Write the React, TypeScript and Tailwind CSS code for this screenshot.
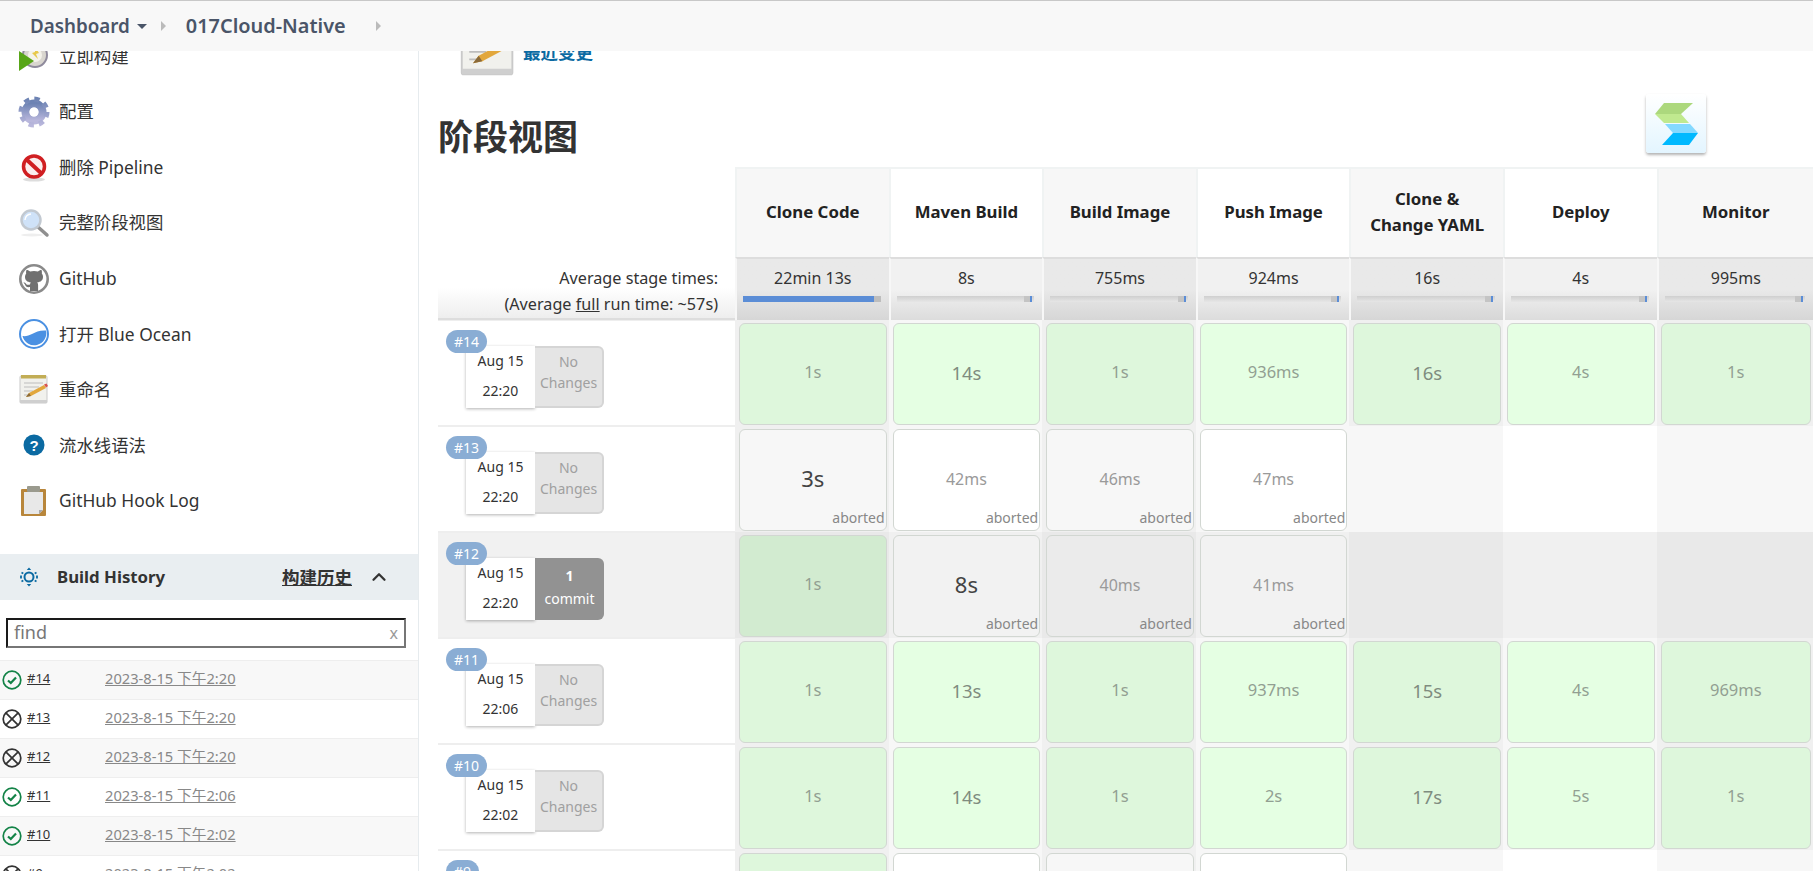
import { ChevronUp } from "lucide-react";

const font = "font-['Noto_Sans','Noto_Sans_CJK_SC',sans-serif]";

function RunIcon() {
  return (
    <svg width="32" height="32" viewBox="0 0 32 32">
      <circle cx="17" cy="15" r="12" fill="#d9d6cf" stroke="#8f8a9c" strokeWidth="2" />
      <circle cx="17" cy="15" r="7" fill="#f4f2ea" />
      <path d="M17 7l4 6-3 1 2 5-6-6 3-1z" fill="#e8c84a" />
      <path d="M1 11l15 10L1 31z" fill="#58a618" />
    </svg>
  );
}

function GearIcon() {
  return (
    <svg width="32" height="32" viewBox="0 0 32 32" fill="none">
      <defs>
        <linearGradient id="gearFill" x1="0" y1="0" x2="0" y2="1">
          <stop offset="0" stopColor="#6d83b3" />
          <stop offset="1" stopColor="#b9b7dc" />
        </linearGradient>
      </defs>
      <circle cx="16" cy="16" r="8.500" stroke="url(#gearFill)" strokeWidth="8" />
      <circle cx="16" cy="16" r="13" stroke="url(#gearFill)" strokeWidth="5" strokeDasharray="5.200 5" />
      <circle cx="16" cy="16" r="4.500" fill="#fff" />
    </svg>
  );
}

function NoIcon() {
  return (
    <svg width="32" height="32" viewBox="0 0 32 32">
      <ellipse cx="16" cy="28.500" rx="11" ry="2" fill="#ddd" />
      <circle cx="16" cy="15.500" r="10.500" fill="#fbeeee" stroke="#d01f22" strokeWidth="3.500" />
      <path d="M8.500 8.500l15 14" stroke="#d01f22" strokeWidth="4" />
    </svg>
  );
}

function SearchIcon() {
  return (
    <svg width="32" height="32" viewBox="0 0 32 32">
      <ellipse cx="14" cy="28" rx="11" ry="1.500" fill="#eeeeee" />
      <path d="M20 20l9 8" stroke="#8f8f8f" strokeWidth="3.500" strokeLinecap="round" />
      <circle cx="13" cy="13" r="9.500" fill="#cfe2f8" stroke="#c2c9d1" strokeWidth="2.500" />
      <path d="M7 13a6 6 0 0 1 6-6" stroke="#fff" strokeWidth="1.500" fill="none" />
    </svg>
  );
}

function GithubIcon() {
  return (
    <svg width="32" height="32" viewBox="0 0 32 32">
      <circle cx="16" cy="16" r="13.700" fill="#fff" stroke="#8a8a8a" strokeWidth="2.600" />
      <path
        d="M12 28v-4c-3 .6-4.400-.6-5-2.500-.4-1-1-1.400-1.600-1.800.7-.5 1.800-.2 2.600 1 .8 1.300 2.200 1.400 4 .8.100-.9.400-1.500.9-2-3.600-.5-5.900-2-5.900-5.700 0-1.300.5-2.400 1.200-3.300-.2-.9-.2-2.200.3-3.400 1.400 0 2.700.7 3.600 1.400 1.200-.3 2.500-.5 3.900-.5s2.700.2 3.900.5c.9-.7 2.200-1.400 3.600-1.400.5 1.200.5 2.500.3 3.400.7.900 1.200 2 1.200 3.300 0 3.700-2.300 5.200-5.900 5.700.7.600 1 1.500 1 2.600V28z"
        fill="#707070"
      />
    </svg>
  );
}

function OceanIcon() {
  return (
    <svg width="32" height="32" viewBox="0 0 32 32">
      <circle cx="16" cy="16" r="14" fill="#fff" stroke="#4a90e2" strokeWidth="2" />
      <path d="M4.500 18C8 18.500 11 17.500 14 16c4-2 8-4 14-3.500A12 12 0 0 1 4.500 18z" fill="#4a90e2" />
    </svg>
  );
}

function NotepadIcon({ size = 32 }: { size?: number }) {
  return (
    <svg width={size} height={size} viewBox="0 0 32 32">
      <rect x="2" y="2" width="27" height="27" rx="1" fill="#f1f1ed" stroke="#c9c9c9" />
      <rect x="3" y="1" width="25" height="3.500" fill="#c2ad55" />
      <path d="M6 9h19M6 13h15M6 17h9M6 21h6" stroke="#bdbdbd" strokeWidth="1" />
      <path d="M8 23l3-4 15-8 2 3-15 8z" fill="#e2a73c" />
      <path d="M8 23l3-4 2 3z" fill="#8a6a3a" />
      <path d="M26 10.500l2 3 2-1.500-1.500-2.500z" fill="#d9534f" />
      <rect x="2" y="26" width="27" height="3" fill="#cfcfcf" />
    </svg>
  );
}

function HelpIcon() {
  return (
    <svg width="32" height="32" viewBox="0 0 32 32">
      <circle cx="16" cy="16" r="10.500" fill="#0b6aa2" />
      <text x="16" y="21.500" textAnchor="middle" fontSize="15" fontWeight="700" fill="#fff" fontFamily="Liberation Sans">
        ?
      </text>
    </svg>
  );
}

function ClipboardIcon() {
  return (
    <svg width="32" height="32" viewBox="0 0 32 32">
      <rect x="3" y="4" width="25" height="27" rx="1" fill="#b8863b" />
      <path d="M6 7h19v18l-4 4H6z" fill="#e8e8e8" />
      <path d="M25 25l-4 4v-4z" fill="#a8a8a8" />
      <rect x="9" y="1" width="13" height="6" rx="1" fill="#9a9a8e" />
    </svg>
  );
}

function SunIcon() {
  return (
    <svg width="20" height="20" viewBox="0 0 20 20" fill="none" stroke="#0b6aa2">
      <circle cx="10" cy="10" r="4.500" strokeWidth="2" />
      <path d="M10 .5L7.800 3h4.400zM10 19.500L7.800 17h4.400z" fill="#0b6aa2" stroke="none" />
      <path d="M2.500 5.500l1.800 1M17.500 5.500l-1.800 1M2.500 14.500l1.800-1M17.500 14.500l-1.800-1M2 8.500v3M18 8.500v3" strokeWidth="1.800" />
    </svg>
  );
}

function SuccessIcon() {
  return (
    <svg width="20" height="20" viewBox="0 0 20 20" fill="none" stroke="#138347">
      <circle cx="10" cy="10" r="8.800" strokeWidth="1.700" />
      <path d="M6 10.500l2.800 2.500L14 7.500" strokeWidth="2.200" />
    </svg>
  );
}

function AbortedIcon() {
  return (
    <svg width="20" height="20" viewBox="0 0 20 20" fill="none" stroke="#333">
      <circle cx="10" cy="10" r="8.800" strokeWidth="1.700" />
      <path d="M4.100 4.100l11.800 11.800M15.900 4.100L4.100 15.900" strokeWidth="1.700" />
    </svg>
  );
}

function StageLogo() {
  return (
    <div className="w-[60px] h-[59px] rounded-[3px] bg-gradient-to-b from-white to-[#e3f5ff] shadow-[0_2px_3px_rgba(0,0,0,0.3)]">
      <svg width="60" height="59" viewBox="0 0 60 59">
        <path d="M18 9h29L35 20H9z" fill="#acd87d" />
        <path d="M9 20h26l8 9H18z" fill="#c0e98f" />
        <path d="M19 30h25l8 9H27z" fill="#84d9ff" />
        <path d="M27 39h25l-9 12H16z" fill="#00b9ff" />
      </svg>
    </div>
  );
}

const tasks = [
  { icon: <GearIcon />, label: "配置" },
  { icon: <NoIcon />, label: "删除 Pipeline" },
  { icon: <SearchIcon />, label: "完整阶段视图" },
  { icon: <GithubIcon />, label: "GitHub" },
  { icon: <OceanIcon />, label: "打开 Blue Ocean" },
  { icon: <NotepadIcon />, label: "重命名" },
  { icon: <HelpIcon />, label: "流水线语法" },
  { icon: <ClipboardIcon />, label: "GitHub Hook Log" },
];

const history = [
  { id: "#14", ok: true, date: "2023-8-15 下午2:20" },
  { id: "#13", ok: false, date: "2023-8-15 下午2:20" },
  { id: "#12", ok: false, date: "2023-8-15 下午2:20" },
  { id: "#11", ok: true, date: "2023-8-15 下午2:06" },
  { id: "#10", ok: true, date: "2023-8-15 下午2:02" },
  { id: "#9", ok: false, date: "2023-8-15 下午2:02" },
];

const stages = [
  { name: "Clone Code", avg: "22min 13s" },
  { name: "Maven Build", avg: "8s" },
  { name: "Build Image", avg: "755ms" },
  { name: "Push Image", avg: "924ms" },
  { name: "Clone &\nChange YAML", avg: "16s" },
  { name: "Deploy", avg: "4s" },
  { name: "Monitor", avg: "995ms" },
];

type Cell = { t: string; s: "ok" | "ab"; c: string };

const sm = "text-[16.5px] text-[#929f92]";
const md = "text-[18.5px] text-[#7f8c7f]";
const lg = "text-[22px] text-[#444]";
const ab = "text-[16px] text-[#9a9a9a]";

const rows: {
  id: string;
  date: string;
  time: string;
  commit?: boolean;
  hover?: boolean;
  cells: (Cell | null)[];
}[] = [
  {
    id: "#14",
    date: "Aug 15",
    time: "22:20",
    cells: [
      { t: "1s", s: "ok", c: sm },
      { t: "14s", s: "ok", c: md },
      { t: "1s", s: "ok", c: sm },
      { t: "936ms", s: "ok", c: sm },
      { t: "16s", s: "ok", c: md },
      { t: "4s", s: "ok", c: sm },
      { t: "1s", s: "ok", c: sm },
    ],
  },
  {
    id: "#13",
    date: "Aug 15",
    time: "22:20",
    cells: [
      { t: "3s", s: "ab", c: lg },
      { t: "42ms", s: "ab", c: ab },
      { t: "46ms", s: "ab", c: ab },
      { t: "47ms", s: "ab", c: ab },
      null,
      null,
      null,
    ],
  },
  {
    id: "#12",
    date: "Aug 15",
    time: "22:20",
    commit: true,
    hover: true,
    cells: [
      { t: "1s", s: "ok", c: sm },
      { t: "8s", s: "ab", c: lg },
      { t: "40ms", s: "ab", c: ab },
      { t: "41ms", s: "ab", c: ab },
      null,
      null,
      null,
    ],
  },
  {
    id: "#11",
    date: "Aug 15",
    time: "22:06",
    cells: [
      { t: "1s", s: "ok", c: sm },
      { t: "13s", s: "ok", c: md },
      { t: "1s", s: "ok", c: sm },
      { t: "937ms", s: "ok", c: sm },
      { t: "15s", s: "ok", c: md },
      { t: "4s", s: "ok", c: sm },
      { t: "969ms", s: "ok", c: sm },
    ],
  },
  {
    id: "#10",
    date: "Aug 15",
    time: "22:02",
    cells: [
      { t: "1s", s: "ok", c: sm },
      { t: "14s", s: "ok", c: md },
      { t: "1s", s: "ok", c: sm },
      { t: "2s", s: "ok", c: sm },
      { t: "17s", s: "ok", c: md },
      { t: "5s", s: "ok", c: sm },
      { t: "1s", s: "ok", c: sm },
    ],
  },
  {
    id: "#9",
    date: "Aug 15",
    time: "22:02",
    cells: [
      { t: "1s", s: "ok", c: sm },
      { t: "", s: "ab", c: ab },
      { t: "", s: "ab", c: ab },
      { t: "", s: "ab", c: ab },
      null,
      null,
      null,
    ],
  },
];

function cellBg(cell: Cell | null, odd: boolean, hover?: boolean) {
  if (!cell) {
    if (hover) return odd ? "bg-[#e9e9e9]" : "bg-[#f0f0f0]";
    return odd ? "bg-[#f7f7f7]" : "bg-white";
  }
  if (cell.s === "ok") {
    if (hover) return odd ? "bg-[#d2ebd0]" : "bg-[#d9f2d7]";
    return odd ? "bg-[#def7dc]" : "bg-[#e5ffe3]";
  }
  if (hover) return odd ? "bg-[#ebebeb]" : "bg-[#f2f2f2]";
  return odd ? "bg-[#f7f7f7]" : "bg-white";
}

function StageCell({ cell, odd, hover }: { cell: Cell | null; odd: boolean; hover?: boolean }) {
  const wrap = hover
    ? odd
      ? "bg-[#e9e9e9]"
      : "bg-[#f0f0f0]"
    : odd
      ? "bg-[#f0f0f0]"
      : "bg-[#f7f7f7]";
  if (!cell) {
    return <div className={`h-[106px] ${cellBg(null, odd, hover)}`} />;
  }
  return (
    <div className={`h-[106px] p-[3px_2px_1px_4px] ${wrap}`}>
      <div
        className={`relative h-full rounded-[6px] border-[1.5px] border-[#d2d7d2] flex items-center justify-center ${cellBg(cell, odd, hover)}`}
      >
        <span className={`-mt-[3px] ${cell.c}`}>{cell.t}</span>
        {cell.s === "ab" && (
          <span className="absolute right-[1px] bottom-[2px] text-[14px] leading-[20px] text-[#888]">aborted</span>
        )}
      </div>
    </div>
  );
}

function AvgBar({ first }: { first: boolean }) {
  return (
    <div className="ml-[6px] mr-[8px] mt-[8px] h-[6px] flex bg-gradient-to-b from-[#cfcfcf] to-[#e6e6e6]">
      {first ? (
        <>
          <div className="flex-1 bg-[#5b8dd6]" />
          <div className="w-[7px] bg-[#bdbdbd]" />
        </>
      ) : (
        <>
          <div className="flex-1" />
          <div className="w-[6px] bg-[#c4c4c4]" />
          <div className="w-[2px] bg-[#5b8dd6]" />
          <div className="w-[2px]" />
        </>
      )}
    </div>
  );
}

export default function App() {
  return (
    <div className={`relative h-[871px] w-[1813px] overflow-hidden bg-white text-[#333] ${font}`}>
      <div className="absolute top-0 left-0 right-0 z-10 h-[51px] bg-[#f8f8f8] border-t border-[#c8c8c8] flex items-center pl-[30px] font-semibold text-[#4a5568]">
        <span className="text-[18.800px]">Dashboard</span>
        <span className="ml-[7px] mt-[1px] w-0 h-0 border-x-[5px] border-x-transparent border-t-[5px] border-t-[#4a5568]" />
        <span className="ml-[14px] w-0 h-0 border-y-[5px] border-y-transparent border-l-[5px] border-l-[#bbb]" />
        <span className="ml-[20px] text-[19.900px]">017Cloud-Native</span>
        <span className="ml-[30px] w-0 h-0 border-y-[5px] border-y-transparent border-l-[5px] border-l-[#bbb]" />
      </div>

      <div className="flex h-full">
        <aside className="w-[419px] shrink-0 border-r border-[#e6ebee] flex flex-col">
          <div className="h-[84px] shrink-0 pt-[28.400px] pl-[18px] flex items-center">
            <RunIcon />
            <span className="ml-[9px] -mt-[1px] text-[17.400px]">立即构建</span>
          </div>
          {tasks.map((t) => (
            <div key={t.label} className="h-[55.6px] shrink-0 flex items-center pl-[18px]">
              {t.icon}
              <span className="ml-[9px] -mt-[1px] text-[17.400px]">{t.label}</span>
            </div>
          ))}
          <div className="mt-[25px] h-[46px] shrink-0 bg-[#e9eef1] flex items-center pl-[19px] pr-[28px]">
            <SunIcon />
            <span className="ml-[18px] font-bold text-[16.800px] flex-1">Build History</span>
            <span className="font-bold text-[17.500px] underline">构建历史</span>
            <ChevronUp className="ml-[16px] w-[22px] h-[22px]" strokeWidth={2.500} />
          </div>
          <div className="h-[60px] shrink-0 pt-[18px] px-[6px]">
            <div className="h-[30px] w-[400px] border-2 border-t-[#1a1a1a] border-l-[#1a1a1a] border-b-[#767676] border-r-[#767676] flex items-center justify-between px-[6px] text-[18px] text-[#777]">
              <span>find</span>
              <span className="text-[16px] text-[#999]">x</span>
            </div>
          </div>
          {history.map((h, i) => (
            <div
              key={h.id}
              className={`h-[39px] shrink-0 border-t border-[#eeeeee] flex items-center pl-[2px] ${i % 2 === 0 ? "bg-[#f8f8f8]" : "bg-white"}`}
            >
              <div className="w-[25px]">{h.ok ? <SuccessIcon /> : <AbortedIcon />}</div>
              <span className="w-[78px] -mt-[3px] text-[13px] underline">{h.id}</span>
              <span className="-mt-[3px] text-[14.700px] text-[#888] underline">{h.date}</span>
            </div>
          ))}
        </aside>

        <main className="flex-1 flex flex-col pl-[19px]">
          <div className="h-[80px] shrink-0 flex items-end pl-[20px]">
            <NotepadIcon size={60} />
            <span className="ml-[5px] mb-[15px] text-[17.500px] font-bold text-[#0b6aa2]">最近变更</span>
          </div>
          <div className="h-[87px] shrink-0 flex items-start justify-between pr-[107px]">
            <h1 className="text-[35px] font-bold leading-[58px] mt-[28px]">阶段视图</h1>
            <div className="mt-[14px]">
              <StageLogo />
            </div>
          </div>

          <div className="grid grid-cols-[297px_repeat(6,153.6px)_1fr] shrink-0">
            <div className="h-[90px]" />
            {stages.map((s, i) => (
              <div
                key={s.name}
                className={`h-[90px] pb-[3px] flex items-center justify-center text-center whitespace-pre-line font-bold text-[16.800px] leading-[26px] text-[#222] border-t-2 border-l-2 border-[#f0f3f3] ${i % 2 === 0 ? "bg-[#f7f7f7]" : "bg-white"}`}
              >
                {s.name}
              </div>
            ))}

            <div className="h-[63px] text-right pr-[17px] pt-[8px] text-[16.200px] leading-[26px] bg-gradient-to-b from-white via-white to-[#eeeeee] border-b-2 border-[#dddddd]">
              <div>Average stage times:</div>
              <div>
                (Average <span className="underline">full</span> run time: ~57s)
              </div>
            </div>
            {stages.map((s, i) => (
              <div
                key={s.avg}
                className={`h-[63px] border-t-2 border-t-[#dddddd] border-l-2 border-l-[#f7f7f7] bg-gradient-to-b ${i % 2 === 0 ? "from-[#e9e9e9] via-[#e9e9e9] to-[#d6d6d6]" : "from-[#f1f1f1] via-[#f1f1f1] to-[#dcdcdc]"}`}
              >
                <div className="text-center text-[16px] leading-[20px] pt-[9px] text-[#333]">{s.avg}</div>
                <AvgBar first={i === 0} />
              </div>
            ))}

            {rows.map((r) => (
              <div key={r.id} className="contents">
                <div
                  className={`relative h-[106px] border-y border-[#eeeeee] ${r.hover ? "bg-[#f1f1f1]" : "bg-white"}`}
                >
                  <div className="absolute left-[8px] top-[9px] z-[1] h-[23px] rounded-[12px] bg-[#8aadd4] px-[8px] text-[14px] leading-[23px] text-white">
                    {r.id}
                  </div>
                  <div className="ml-[28px] mt-[25px] flex w-[138px] h-[62px]">
                    <div className="w-[69px] bg-white shadow-[0_1px_3px_rgba(0,0,0,0.3)] text-center text-[14px] leading-[30px] text-[#333]">
                      <div>{r.date}</div>
                      <div>{r.time}</div>
                    </div>
                    {r.commit ? (
                      <div className="w-[69px] rounded-r-[6px] bg-[#929292] text-center text-[14px] leading-[23px] text-white pt-[6px]">
                        <div className="font-bold">1</div>
                        <div>commit</div>
                      </div>
                    ) : (
                      <div className="w-[69px] rounded-r-[6px] bg-[#e5e5e5] border-2 border-l-0 border-[#d5d5d5] text-center text-[14px] leading-[21px] text-[#a0a0a0] pt-[3px]">
                        <div>No</div>
                        <div>Changes</div>
                      </div>
                    )}
                  </div>
                </div>
                {r.cells.map((c, i) => (
                  <StageCell key={i} cell={c} odd={i % 2 === 0} hover={r.hover} />
                ))}
              </div>
            ))}
          </div>
        </main>
      </div>
    </div>
  );
}
